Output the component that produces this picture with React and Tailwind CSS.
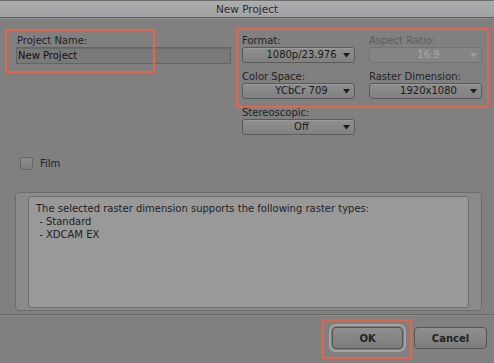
import React from "react";

const font = { fontFamily: '"DejaVu Sans", Verdana, sans-serif' };

function Arrow({ disabled }) {
  return (
    <svg width="7" height="5" viewBox="0 0 7 5" className="absolute right-[4px] top-[5px]">
      <path d="M0 0 L7 0 L3.5 4.5 Z" fill={disabled ? "#9c9c9c" : "#1c1c1c"} />
    </svg>
  );
}

function Dropdown({ value, disabled }) {
  return (
    <div
      className={
        "relative h-[16px] rounded-[3px] border flex items-center justify-center text-[10px] leading-[14px] " +
        (disabled
          ? "border-[#747474] bg-[#858585] text-[#a9a9a9]"
          : "border-[#5a5a5a] bg-gradient-to-b from-[#8f8f8f] to-[#818181] text-[#1a1a1a] shadow-[inset_0_1px_0_#9a9a9a]")
      }
    >
      <span className="pl-[6px]">{value}</span>
      <Arrow disabled={disabled} />
    </div>
  );
}

function Field({ label, value, disabled }) {
  return (
    <div className="flex flex-col">
      <div
        className={
          "h-[13px] leading-[13px] text-[10px] " +
          (disabled ? "text-[#5e5e5e]" : "text-[#222]")
        }
      >
        {label}
      </div>
      <Dropdown value={value} disabled={disabled} />
    </div>
  );
}

export default function App() {
  return (
    <div
      className="relative w-[494px] h-[363px] bg-[#808080] overflow-hidden flex flex-col"
      style={font}
    >
      {/* title bar */}
      <div className="h-[18px] shrink-0 bg-gradient-to-b from-[#acadaf] to-[#a0a1a3] border-t border-[#6d6d6d] border-b border-b-[#5f5f5f] shadow-[0_1px_0_#8e8e8e] flex items-center justify-center">
        <span className="text-[10.5px] leading-[14px] text-[#262626] [text-shadow:0_1px_0_#b8b8b8]">
          New Project
        </span>
      </div>

      {/* top fields */}
      <div className="flex pt-[16px] pl-[16px]">
        <div className="w-[215px] flex flex-col">
          <div className="h-[13px] leading-[13px] text-[10px] text-[#222] pl-[1px]">Project Name:</div>
          <div className="h-[17px] border border-[#646464] bg-[#7a7a7a] shadow-[inset_0_1px_1px_#6a6a6a] flex items-center pl-[1px] text-[10px] leading-[14px] text-[#111]">
            New Project
          </div>
        </div>
        <div className="ml-[11px] grid grid-cols-[113px_113px] gap-x-[14px] gap-y-[7px]">
          <Field label="Format:" value="1080p/23.976" />
          <Field label="Aspect Ratio:" value="16:9" disabled />
          <Field label="Color Space:" value="YCbCr 709" />
          <Field label="Raster Dimension:" value="1920x1080" />
          <Field label="Stereoscopic:" value="Off" />
        </div>
      </div>

      {/* film checkbox */}
      <div className="flex items-center pl-[20px] mt-[22px] gap-[7px]">
        <div className="w-[13px] h-[13px] rounded-[2px] border border-[#666] bg-gradient-to-b from-[#8c8c8c] to-[#7f7f7f]" />
        <span className="text-[10px] leading-[13px] text-[#222]">Film</span>
      </div>

      {/* info panel */}
      <div className="ml-[15px] mt-[22px] w-[467px] h-[119px] rounded-[4px] border border-[#6c6c6c] bg-[#8b8b8b] pl-[12px] pt-[3px]">
        <div className="w-[441px] h-[112px] rounded-[3px] border border-[#6e6e6e] bg-[#999999] pl-[7px] pt-[5px] text-[10px] leading-[13px] text-[#222] whitespace-pre">
          {"The selected raster dimension supports the following raster types:\n - Standard\n - XDCAM EX"}
        </div>
      </div>

      {/* separator */}
      <div className="mt-[3px] h-[2px] border-t border-[#6a6a6a] bg-[#8c8c8c]" />

      {/* buttons */}
      <div className="flex justify-end pr-[7px] mt-[11px] gap-[11px]">
        <div className="w-[71px] h-[22px] rounded-[4px] border border-[#555] bg-gradient-to-b from-[#8f8f8f] to-[#7c7c7c] shadow-[0_0_0_1px_#7d7d7d,0_0_0_3px_#a4a4a4] flex items-center justify-center text-[10px] font-bold text-[#222]">
          OK
        </div>
        <div className="w-[73px] h-[22px] rounded-[4px] border border-[#555] bg-gradient-to-b from-[#8f8f8f] to-[#7c7c7c] flex items-center justify-center text-[10px] font-bold text-[#222]">
          Cancel
        </div>
      </div>

      {/* annotation boxes */}
      <div className="absolute left-[5px] top-[29px] w-[150px] h-[44px] border-2 border-[#e4644c]" />
      <div className="absolute left-[236px] top-[28px] w-[253px] h-[80px] border-2 border-[#e4644c]" />
      <div className="absolute left-[322px] top-[319px] w-[90px] h-[40px] border-2 border-[#e4644c]" />
    </div>
  );
}
